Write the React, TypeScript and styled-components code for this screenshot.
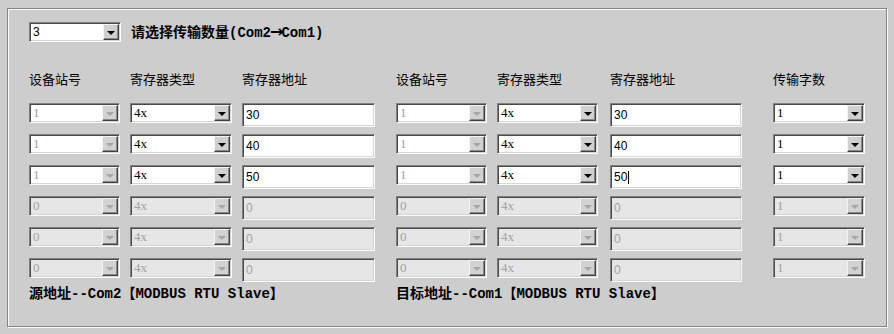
import React from 'react';
import styled, { createGlobalStyle } from 'styled-components';

const GlobalStyle = createGlobalStyle`
  html, body {
    margin: 0;
    padding: 0;
    background: #cdcdcd;
  }
  body {
    font-family: "Noto Sans CJK SC", "Liberation Sans", sans-serif;
    color: #000;
  }
`;

const COLS = '91px 102px 144px 91px 103px 153px 92px';

const Page = styled.div`
  width: 894px;
  height: 334px;
  box-sizing: border-box;
  padding: 8px 0 0 7px;
`;

const Panel = styled.div`
  width: 880px;
  height: 319px;
  box-sizing: border-box;
  border: 1px solid #858585;
  box-shadow: inset 1px 1px #fafafa, 1px 1px #fafafa;
  padding: 13px 0 0 21px;
`;

const TopRow = styled.div`
  display: flex;
  align-items: center;
  gap: 10px;
  height: 20px;
`;

const BoldLabel = styled.span`
  font-family: "Liberation Mono", "Noto Sans CJK SC", monospace;
  font-weight: 700;
  font-size: 14px;
  line-height: 16px;
  white-space: nowrap;
`;

const ArrowGlyph = styled.span`
  font-family: "DejaVu Sans", sans-serif;
  font-weight: 700;
  font-size: 16px;
  line-height: 16px;
  letter-spacing: -2px;
  margin-left: -1px;
`;

const Grid = styled.div<{ $top: number; $rowGap?: number }>`
  display: grid;
  grid-template-columns: ${COLS};
  column-gap: 10px;
  row-gap: ${p => p.$rowGap ?? 0}px;
  margin-top: ${p => p.$top}px;
`;

const Header = styled.div`
  font-size: 13px;
  line-height: 16px;
  height: 16px;
  white-space: nowrap;
`;

const FooterLabel = styled(BoldLabel)<{ $span: string }>`
  grid-column: ${p => p.$span};
`;

const Sunken = styled.div<{ $w: number; $h: number; $off?: boolean }>`
  width: ${p => p.$w}px;
  height: ${p => p.$h}px;
  box-sizing: border-box;
  align-self: start;
  background: ${p => (p.$off ? '#e6e6e6' : '#ffffff')};
  border-style: solid;
  border-width: 1px;
  border-color: #808080 #fbfbfb #fbfbfb #808080;
  box-shadow: inset 1px 1px #4a4a4a, inset -1px -1px #d6d6d6;
  display: flex;
  align-items: center;
`;

const ComboValue = styled.span<{ $grey?: boolean; $sans?: boolean }>`
  flex: 1;
  padding-left: 3px;
  font-family: ${p => (p.$sans ? '"Liberation Sans", Arial' : '"Liberation Serif", "Times New Roman"')}, serif;
  font-size: ${p => (p.$sans ? 12 : 13)}px;
  line-height: 14px;
  color: ${p => (p.$grey ? '#a2a2a2' : '#000')};
`;

const DropButton = styled.div<{ $grey?: boolean }>`
  width: 16px;
  height: 16px;
  margin-right: 1px;
  box-sizing: border-box;
  background: ${p => (p.$grey ? '#d2d2d2' : '#d0d0d0')};
  border-style: solid;
  border-width: 1px;
  border-color: #f4f4f4 #404040 #404040 #f4f4f4;
  box-shadow: inset -1px -1px #888888;
  display: flex;
  align-items: center;
  justify-content: center;
`;

const Arrow = styled.span<{ $grey?: boolean }>`
  width: 0;
  height: 0;
  margin-top: 1px;
  border-left: 4px solid transparent;
  border-right: 4px solid transparent;
  border-top: 4px solid ${p => (p.$grey ? '#a6a6a6' : '#000')};
`;

const EditText = styled.span<{ $grey?: boolean }>`
  align-self: flex-start;
  padding: 4px 0 0 3px;
  font-family: "Liberation Sans", Arial, sans-serif;
  font-size: 12px;
  line-height: 14px;
  color: ${p => (p.$grey ? '#a2a2a2' : '#000')};
  display: flex;
  align-items: center;
`;

const Caret = styled.span`
  display: inline-block;
  width: 1px;
  height: 13px;
  margin-left: 1px;
  background: #000;
`;

interface ComboProps {
  value: string;
  w: number;
  off?: boolean;
  grey?: boolean;
  sans?: boolean;
}

const Combo: React.FC<ComboProps> = ({ value, w, off, grey, sans }) => (
  <Sunken $w={w} $h={20} $off={off}>
    <ComboValue $grey={grey || off} $sans={sans}>{value}</ComboValue>
    <DropButton $grey={grey || off}>
      <Arrow $grey={grey || off} />
    </DropButton>
  </Sunken>
);

interface EditProps {
  value: string;
  w: number;
  off?: boolean;
  caret?: boolean;
}

const Edit: React.FC<EditProps> = ({ value, w, off, caret }) => (
  <Sunken $w={w} $h={24} $off={off}>
    <EditText $grey={off}>
      {value}
      {caret && <Caret />}
    </EditText>
  </Sunken>
);

const rows = [
  { station: '1', addr: '30', on: true },
  { station: '1', addr: '40', on: true },
  { station: '1', addr: '50', on: true },
  { station: '0', addr: '0', on: false },
  { station: '0', addr: '0', on: false },
  { station: '0', addr: '0', on: false },
];

const headers = ['设备站号', '寄存器类型', '寄存器地址', '设备站号', '寄存器类型', '寄存器地址', '传输字数'];

const App: React.FC = () => (
  <Page>
    <GlobalStyle />
    <Panel>
      <TopRow>
        <Combo value="3" w={92} sans />
        <BoldLabel>
          请选择传输数量(Com2<ArrowGlyph>→</ArrowGlyph>Com1)
        </BoldLabel>
      </TopRow>

      <Grid $top={29}>
        {headers.map((h, i) => (
          <Header key={i}>{h}</Header>
        ))}
      </Grid>

      <Grid $top={16} $rowGap={7}>
        {rows.map((r, i) => (
          <React.Fragment key={i}>
            <Combo value={r.station} w={91} off={!r.on} grey />
            <Combo value="4x" w={102} off={!r.on} />
            <Edit value={r.addr} w={133} off={!r.on} />
            <Combo value={r.station} w={91} off={!r.on} grey />
            <Combo value="4x" w={101} off={!r.on} />
            <Edit value={r.addr} w={132} off={!r.on} caret={i === 2} />
            <Combo value="1" w={92} off={!r.on} />
          </React.Fragment>
        ))}
      </Grid>

      <Grid $top={4}>
        <FooterLabel $span="1 / 4">源地址--Com2【MODBUS RTU Slave】</FooterLabel>
        <FooterLabel $span="4 / 8">目标地址--Com1【MODBUS RTU Slave】</FooterLabel>
      </Grid>
    </Panel>
  </Page>
);

export default App;
